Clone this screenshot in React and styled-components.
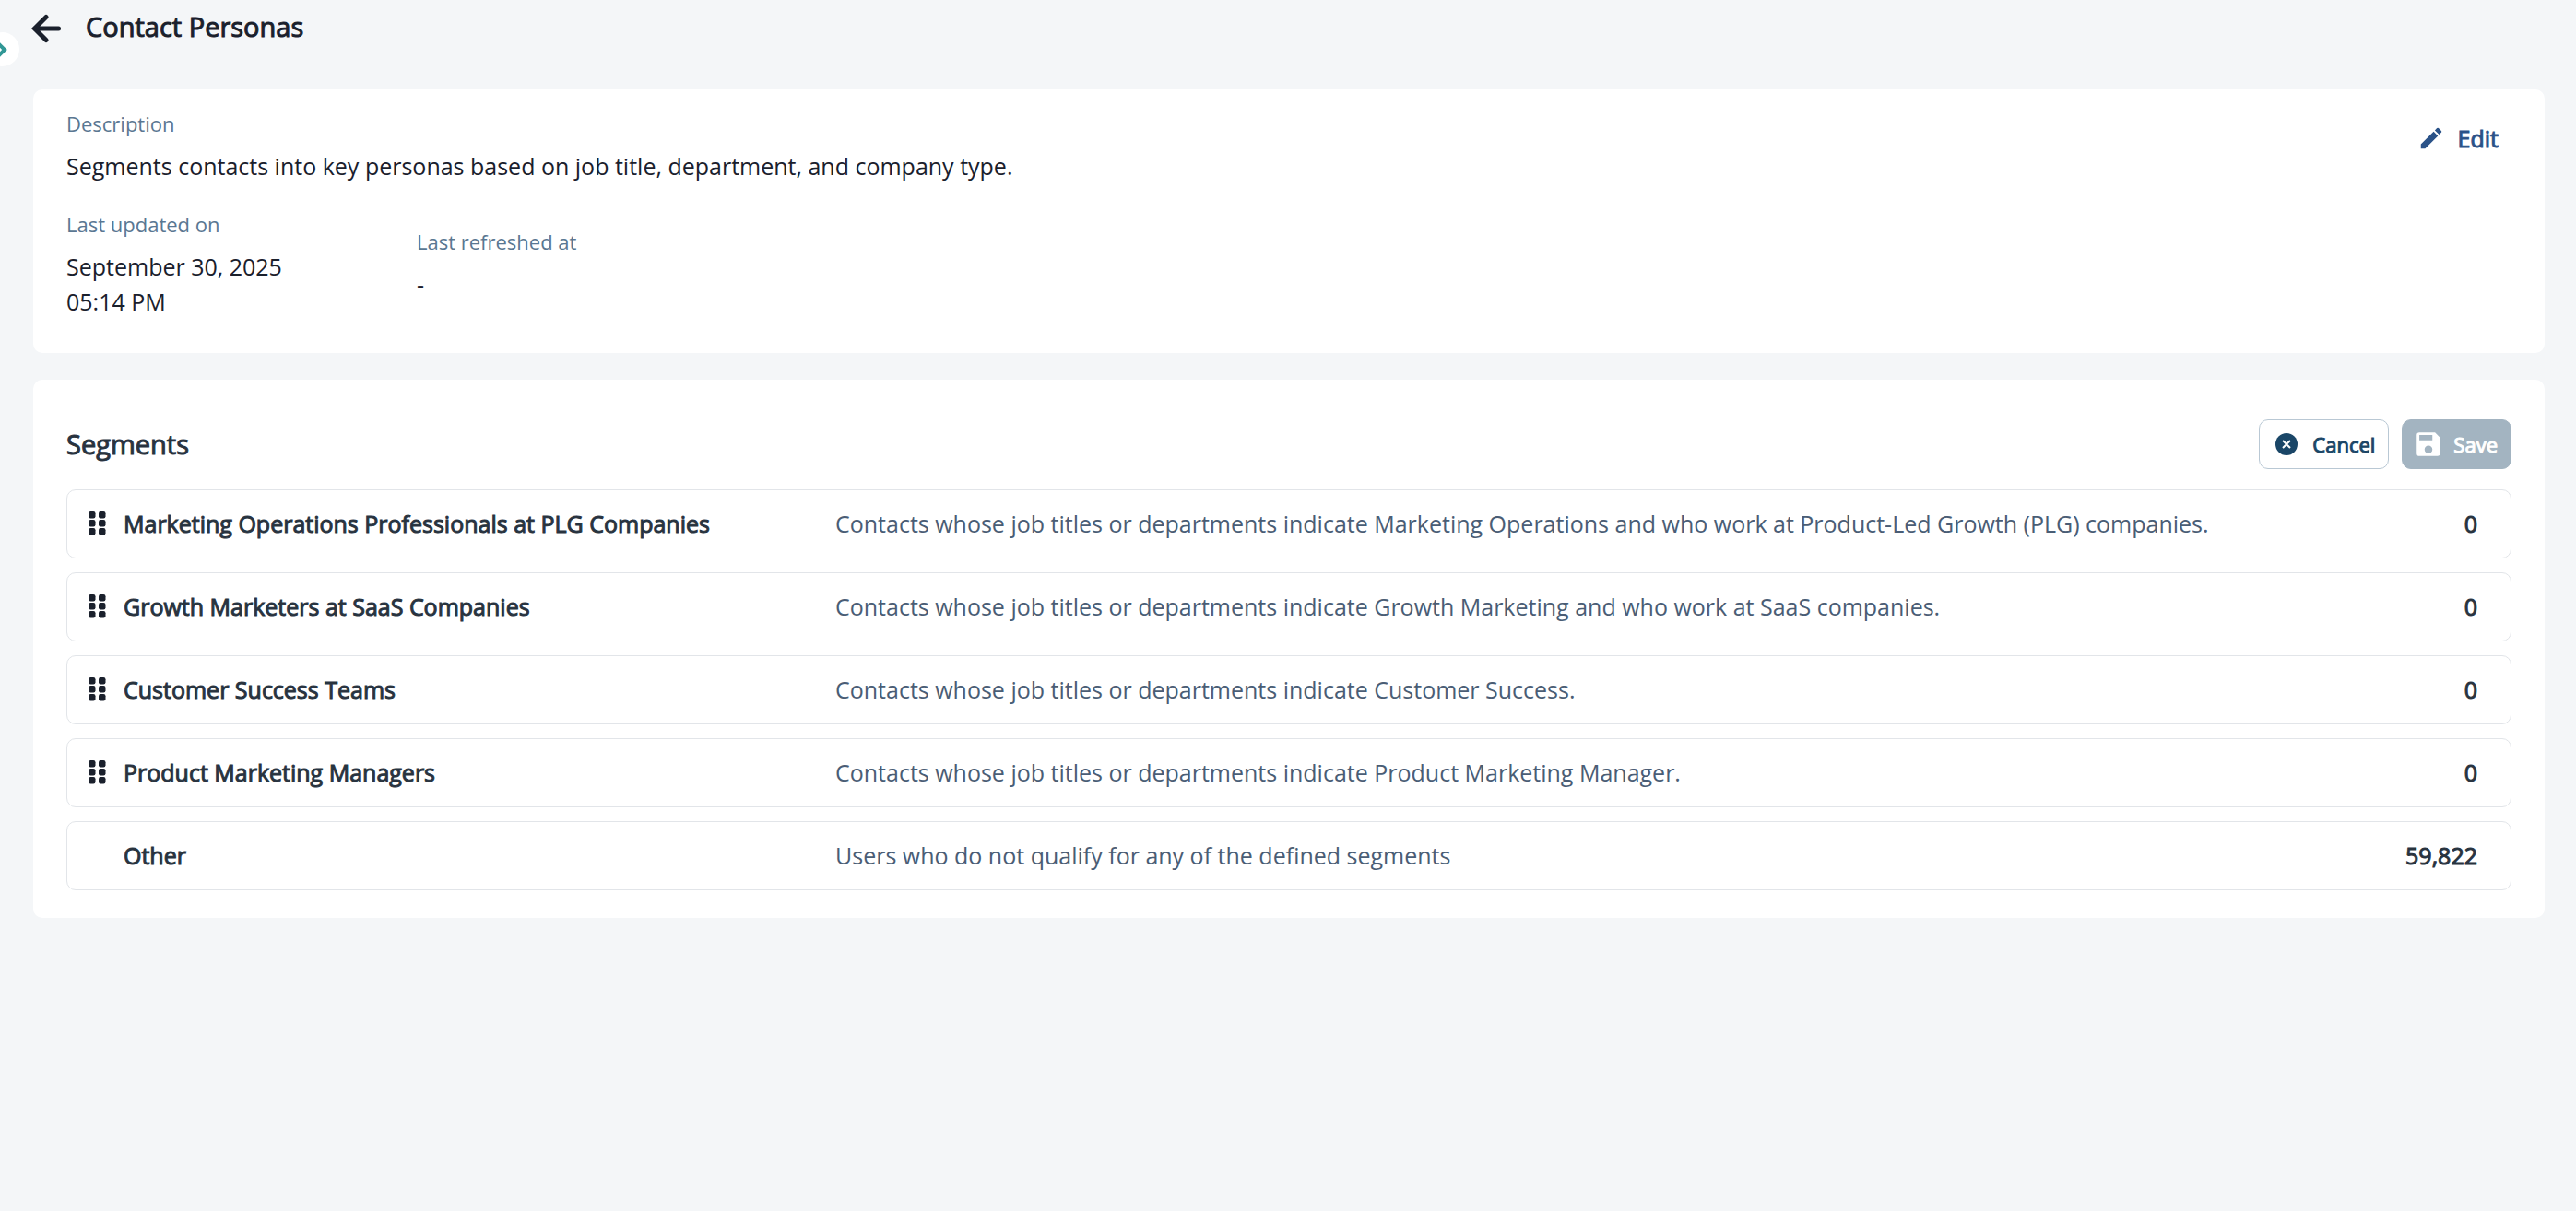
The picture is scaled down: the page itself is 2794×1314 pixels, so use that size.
import * as React from 'react';
import styled, { createGlobalStyle, css } from 'styled-components';
import { MdEdit, MdSave } from 'react-icons/md';

const segments = [
    {
        name: 'Marketing Operations Professionals at PLG Companies',
        description:
            'Contacts whose job titles or departments indicate Marketing Operations and who work at Product-Led Growth (PLG) companies.',
        count: 0,
        draggable: true
    },
    {
        name: 'Growth Marketers at SaaS Companies',
        description: 'Contacts whose job titles or departments indicate Growth Marketing and who work at SaaS companies.',
        count: 0,
        draggable: true
    },
    {
        name: 'Customer Success Teams',
        description: 'Contacts whose job titles or departments indicate Customer Success.',
        count: 0,
        draggable: true
    },
    {
        name: 'Product Marketing Managers',
        description: 'Contacts whose job titles or departments indicate Product Marketing Manager.',
        count: 0,
        draggable: true
    },
    {
        name: 'Other',
        description: 'Users who do not qualify for any of the defined segments',
        count: 59822,
        draggable: false
    }
];

export default function App() {
    return (
        <>
            <GlobalStyle />
            <SidebarToggle aria-label="Expand sidebar">
                <ChevronIcon />
            </SidebarToggle>
            <Header>
                <IconButton aria-label="Back">
                    <BackIcon />
                </IconButton>
                <PageTitle>Contact Personas</PageTitle>
            </Header>
            <Main>
                <DetailsCard />
                <SegmentsCard />
            </Main>
        </>
    );
}

function DetailsCard() {
    return (
        <Details>
            <Fields>
                <Field label="Description">
                    Segments contacts into key personas based on job title, department, and company type.
                </Field>
                <FieldRow>
                    <Field label="Last updated on">
                        September 30, 2025
                        <br />
                        05:14 PM
                    </Field>
                    <Field label="Last refreshed at">-</Field>
                </FieldRow>
            </Fields>
            <EditButton>
                <MdEdit size={30} />
                Edit
            </EditButton>
        </Details>
    );
}

function Field({ label, children }) {
    return (
        <FieldGroup>
            <FieldLabel>{label}</FieldLabel>
            <FieldValue>{children}</FieldValue>
        </FieldGroup>
    );
}

function SegmentsCard() {
    return (
        <Segments>
            <SegmentsHeader>
                <SectionTitle>Segments</SectionTitle>
                <Actions>
                    <CancelButton>
                        <CancelIcon />
                        Cancel
                    </CancelButton>
                    <SaveButton disabled>
                        <MdSave size={34} />
                        Save
                    </SaveButton>
                </Actions>
            </SegmentsHeader>
            <SegmentList>
                {segments.map(segment => (
                    <SegmentRow key={segment.name}>
                        <Handle>
                            {segment.draggable && (
                                <IconButton aria-label={`Reorder ${segment.name}`}>
                                    <GripIcon />
                                </IconButton>
                            )}
                        </Handle>
                        <SegmentName>{segment.name}</SegmentName>
                        <SegmentDescription>{segment.description}</SegmentDescription>
                        <SegmentCount>{segment.count.toLocaleString('en-US')}</SegmentCount>
                    </SegmentRow>
                ))}
            </SegmentList>
        </Segments>
    );
}

const ChevronIcon = () => (
    <svg width="12" height="20" viewBox="0 0 12 20" fill="none" stroke="#319795" strokeWidth="4">
        <path d="M-1 2L7 10L-1 18" />
    </svg>
);

const BackIcon = () => (
    <svg width="32" height="32" viewBox="0 0 32 32" fill="#1a202c" stroke="#1a202c" strokeWidth="5">
        <path d="M4 16H29.5" strokeLinecap="round" />
        <path d="M16 3.5L3.5 16L16 28.5" fill="none" strokeLinecap="round" />
    </svg>
);

const CancelIcon = () => (
    <svg width="24" height="24" viewBox="0 0 24 24">
        <circle cx="12" cy="12" r="12" fill="#1a4667" />
        <path d="M8 8L16 16M16 8L8 16" stroke="#fff" strokeWidth="2" />
    </svg>
);

const GripIcon = () => (
    <svg width="19" height="26" viewBox="0 0 19 26" fill="#1a202c">
        {[0, 11].map(x =>
            [0, 9, 18].map(y => <rect key={`${x}-${y}`} x={x} y={y} width="7.5" height="7.5" rx="2.2" />)
        )}
    </svg>
);

const GlobalStyle = createGlobalStyle`
    * {
        box-sizing: border-box;
    }

    body {
        margin: 0;
        min-height: 100vh;
        background: #f4f6f8;
        color: #1a202c;
        font-family: 'Open Sans', 'Noto Sans', sans-serif;
        font-size: 25px;
        line-height: 38px;
    }
`;

// regular letterforms, thickened
const emphasis = css`
    font-weight: 400;
    -webkit-text-stroke: 1px currentColor;
`;

const buttonReset = css`
    display: inline-flex;
    align-items: center;
    padding: 0;
    border: 0;
    background: none;
    color: inherit;
    font: inherit;
    cursor: pointer;
`;

const IconButton = styled.button`
    ${buttonReset}
`;

const SidebarToggle = styled.button`
    ${buttonReset}
    position: absolute;
    top: 35px;
    left: -16px;
    width: 37px;
    height: 37px;
    padding-left: 14px;
    border-radius: 50%;
    background: #fff;
`;

const Header = styled.header`
    display: flex;
    align-items: center;
    gap: 27px;
    height: 62px;
    padding: 0 34px;
`;

const PageTitle = styled.h1`
    margin: 0;
    padding-bottom: 4px;
    font-size: 29px;
    ${emphasis}
`;

const Main = styled.main`
    display: flex;
    flex-direction: column;
    gap: 29px;
    padding: 35px 34px 36px 36px;
`;

const Card = styled.section`
    border-radius: 10px;
    background: #fff;
`;

const Details = styled(Card)`
    display: flex;
    justify-content: space-between;
    align-items: flex-start;
    padding: 21px 36px 37px;
`;

const Fields = styled.div`
    display: flex;
    flex-direction: column;
    gap: 28px;
`;

const FieldRow = styled.div`
    display: grid;
    grid-template-columns: 380px auto;
    align-items: center;
`;

const FieldGroup = styled.div`
    display: flex;
    flex-direction: column;
    gap: 10px;
`;

const FieldLabel = styled.div`
    color: #5a7792;
    font-size: 22px;
    line-height: 33px;
`;

const FieldValue = styled.div``;

const EditButton = styled.button`
    ${buttonReset}
    gap: 14px;
    padding: 13px 14px;
    color: #2a5288;
    ${emphasis}
`;

const Segments = styled(Card)`
    padding: 43px 36px 30px;
`;

const SegmentsHeader = styled.div`
    display: flex;
    align-items: center;
    justify-content: space-between;
    margin-bottom: 22px;
`;

const SectionTitle = styled.h2`
    margin: 0;
    color: #28333f;
    font-size: 29px;
    ${emphasis}
`;

const Actions = styled.div`
    display: flex;
    gap: 14px;
`;

const ActionButton = styled.button`
    ${buttonReset}
    height: 54px;
    padding: 0 14px;
    border: 1px solid;
    border-radius: 10px;
    font-size: 22px;
    ${emphasis}
`;

const CancelButton = styled(ActionButton)`
    gap: 16px;
    padding-left: 17px;
    border-color: #b9c8d4;
    color: #1a4667;
`;

const SaveButton = styled(ActionButton)`
    gap: 10px;
    padding-left: 11px;
    border-color: #a3b4c1;
    background: #a3b4c1;
    color: #fff;
    cursor: default;
`;

const SegmentList = styled.ul`
    display: flex;
    flex-direction: column;
    gap: 15px;
    margin: 0;
    padding: 0;
    list-style: none;
`;

const SegmentRow = styled.li`
    display: grid;
    grid-template-columns: 38px 772px 1fr auto;
    align-items: center;
    min-height: 75px;
    padding: 0 36px 2px 23px;
    border: 1px solid #e2e5e9;
    border-radius: 10px;
`;

const Handle = styled.div`
    display: flex;
`;

const SegmentName = styled.div`
    color: #28333f;
    ${emphasis}
`;

const SegmentDescription = styled.div`
    color: #4a5d75;
`;

const SegmentCount = styled.div`
    color: #28333f;
    ${emphasis}
`;
